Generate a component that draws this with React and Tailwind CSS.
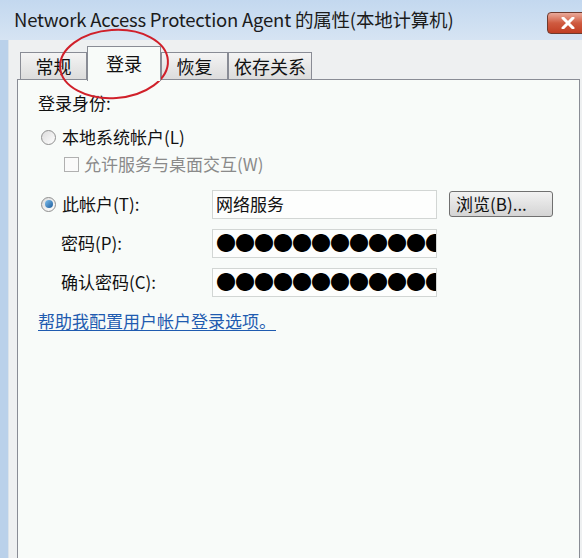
import React from "react";

const CJK = { fontFamily: '"Noto Sans CJK SC", "Noto Sans", sans-serif' };

/* ─── Radio ─── */
const Radio = ({ checked }) => (
  <span className="w-[15px] h-[15px] rounded-full border border-[#8f8f8f] bg-gradient-to-br from-[#dcdcdc] to-[#ffffff] flex items-center justify-center shrink-0">
    {checked && <span className="w-[8px] h-[8px] rounded-full bg-gradient-to-br from-[#7ec0ee] to-[#1a5c9c]" />}
  </span>
);

/* ─── Tab ─── */
const Tab = ({ label, active, w }) =>
  active ? (
    <div className={`${w} h-[35px] -mb-[2px] bg-[#f8fbf9] border border-b-0 border-[#898c95] flex items-start justify-center pt-[3px] text-[18px] text-[#111] z-10`}>
      {label}
    </div>
  ) : (
    <div className={`${w} h-[27px] bg-gradient-to-b from-[#f4f4f4] to-[#dcdcdc] border border-b-0 border-[#898c95] flex items-center justify-center text-[18px] text-[#111]`}>
      {label}
    </div>
  );

/* ─── Input ─── */
const Field = ({ children }) => (
  <div className="w-[225px] h-[29px] border border-[#d2d6d4] bg-[#fdfefd] flex items-center pl-[3px] overflow-hidden whitespace-nowrap">
    {children}
  </div>
);

const Dots = () => (
  <span className="text-[20px] leading-none tracking-[-1px] text-black">●●●●●●●●●●●●●●●</span>
);

export default function App() {
  return (
    <div className="w-[582px] h-[558px] bg-[#bad1ea] flex flex-col overflow-hidden relative" style={CJK}>
      {/* ── Title Bar ── */}
      <div className="h-[40px] bg-gradient-to-b from-[#c3d8ef] to-[#d6e4f3] flex items-center pl-[14px] relative">
        <span className="text-[18.5px] text-[#1b1b1b] tracking-[-0.2px]">
          Network Access Protection Agent 的属性(本地计算机)
        </span>
        <div className="absolute right-[-6px] top-[12px] w-[41px] h-[22px] rounded-[4px] border border-[#6e3a2e] bg-gradient-to-b from-[#e9a99a] via-[#cf5a40] to-[#c13e23] flex items-center justify-center">
          <svg width="14" height="12" viewBox="0 0 14 12">
            <path d="M2 1 L12 11 M12 1 L2 11" stroke="#ffffff" strokeWidth="3" strokeLinecap="round" />
          </svg>
        </div>
      </div>

      {/* ── Dialog Body ── */}
      <div className="flex-1 flex pl-[8px]">
        <div className="flex-1 bg-[#eef0f1] border-l border-[#dbe3ea] pl-[8px] pt-[6px] flex flex-col">
          {/* Tabs */}
          <div className="flex items-end h-[33px] pl-[3px]">
            <Tab label="常规" w="w-[67px]" />
            <Tab label="登录" active w="w-[74px]" />
            <Tab label="恢复" w="w-[67px]" />
            <Tab label="依存关系" w="w-[84px]" />
          </div>

          {/* Panel */}
          <div className="flex-1 mr-[2px] border border-b-0 border-[#898c95] bg-[#f8fbf9] pl-[20px] pt-[11px] flex flex-col text-[17px] text-[#111]">
            <div className="h-[24px] flex items-center">登录身份:</div>

            <div className="mt-[10px] h-[24px] flex items-center gap-[6px] pl-[3px]">
              <Radio />
              <span>本地系统帐户(L)</span>
            </div>
            <div className="mt-[3px] h-[24px] flex items-center gap-[5px] pl-[26px] text-[#8a8a8a]">
              <span className="w-[15px] h-[15px] border border-[#b0b0b0] bg-[#fafafa]" />
              <span>允许服务与桌面交互(W)</span>
            </div>

            <div className="mt-[13px] flex items-center h-[30px]">
              <div className="w-[174px] flex items-center gap-[6px] pl-[3px]">
                <Radio checked />
                <span>此帐户(T):</span>
              </div>
              <Field>
                <span>网络服务</span>
              </Field>
              <div className="ml-[12px] w-[104px] h-[26px] rounded-[3px] border border-[#707070] bg-gradient-to-b from-[#f2f2f2] to-[#d4d4d4] flex items-center pl-[6px] text-[17px]">
                浏览(B)...
              </div>
            </div>

            <div className="mt-[9px] flex items-center h-[30px]">
              <div className="w-[174px] pl-[23px]">密码(P):</div>
              <Field>
                <Dots />
              </Field>
            </div>

            <div className="mt-[9px] flex items-center h-[30px]">
              <div className="w-[174px] pl-[23px]">确认密码(C):</div>
              <Field>
                <Dots />
              </Field>
            </div>

            <div className="mt-[12px] h-[24px] flex items-center">
              <span className="text-[#1f5bb0] underline underline-offset-2">帮助我配置用户帐户登录选项。</span>
            </div>
          </div>
        </div>
      </div>

      {/* ── Red annotation ellipse ── */}
      <svg className="absolute left-[56px] top-[26px] pointer-events-none" width="116" height="76" viewBox="0 0 116 76">
        <ellipse cx="58" cy="38" rx="54" ry="34" fill="none" stroke="#d0202a" strokeWidth="2" transform="rotate(-4 58 38)" />
      </svg>
    </div>
  );
}
